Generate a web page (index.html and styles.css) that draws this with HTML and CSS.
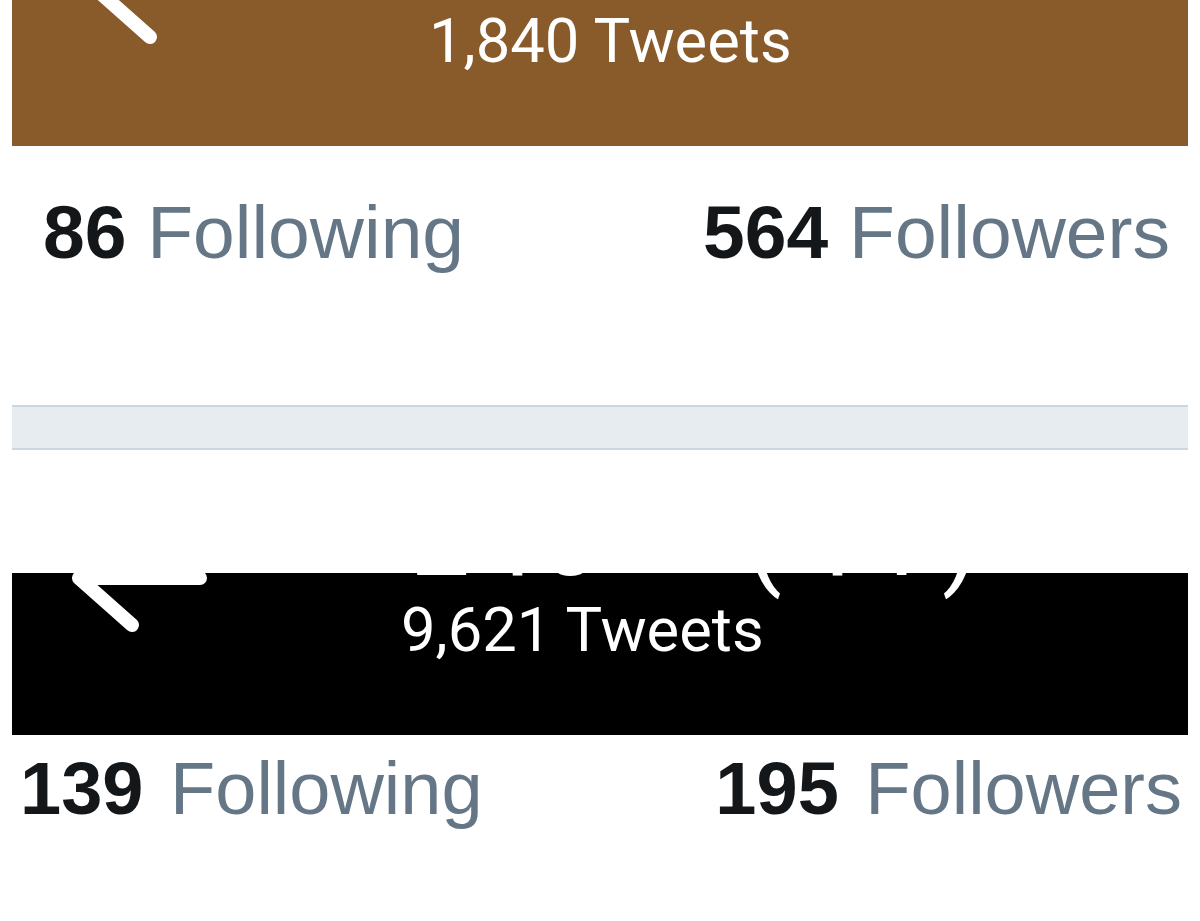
FILE: index.html
```html
<!DOCTYPE html>
<html lang="en">
<head>
    <meta charset="UTF-8">
    <meta name="viewport" content="width=device-width, initial-scale=1.0">
    <title>Profile Stats</title>
    <link rel="stylesheet" href="styles.css">
</head>
<body>

    <main class="feed">

        <section class="profile profile-brown">
            <header class="cover cover-brown">
                <div class="cover-inner">
                    <svg class="back" viewBox="0 0 150 120" width="150" height="120" aria-label="Back">
                        <path d="M10 60 H131 M10 60 L63 13 M10 60 L63 107" />
                    </svg>
                    <div class="title">
                        <div class="name">Jesse</div>
                        <div class="count">1,840 Tweets</div>
                    </div>
                </div>
            </header>
            <div class="stats">
                <a class="stat" href="#"><b>86</b> Following</a>
                <a class="stat" href="#"><b>564</b> Followers</a>
            </div>
        </section>

        <div class="divider"></div>

        <section class="profile profile-dark">
            <header class="cover cover-dark">
                <div class="cover-inner">
                    <svg class="back" viewBox="0 0 150 120" width="150" height="120" aria-label="Back">
                        <path d="M10 60 H131 M10 60 L63 13 M10 60 L63 107" />
                    </svg>
                    <div class="title">
                        <div class="name">240<span class="name-note">(41)</span></div>
                        <div class="count">9,621 Tweets</div>
                    </div>
                </div>
            </header>
            <div class="stats">
                <a class="stat" href="#"><b>139</b> Following</a>
                <a class="stat" href="#"><b>195</b> Followers</a>
            </div>
        </section>

    </main>

</body>
</html>
```

FILE: styles.css
```css
body {
    margin: 0;
    background: #fff;
    font-family: "Liberation Sans", Arial, sans-serif;
}

.feed {
    margin: 0 12px;
}

/* cover bar, scrolled up so the name is cut off */
.cover {
    overflow: hidden;
    color: #fff;
    font-family: Roboto, "Noto Sans", sans-serif;
}

.cover-brown {
    height: 146px;
    background: #8a5b2a;
}

.cover-dark {
    height: 162px;
    background: #000;
}

.cover-inner {
    display: flex;
    align-items: flex-start;
}

.cover-brown .cover-inner {
    margin-top: -90px;
}

.cover-dark .cover-inner {
    margin-top: -74px;
}

.back {
    flex: none;
    margin-top: 20px;
}

.back path {
    fill: none;
    stroke: #fff;
    stroke-width: 14;
    stroke-linecap: round;
    stroke-linejoin: round;
}

.cover-brown .back {
    margin-left: 75px;
}

.cover-dark .back {
    margin-left: 57px;
    margin-top: 19px;
}

.title {
    white-space: nowrap;
}

.cover-brown .title {
    margin-left: 192px;
}

.cover-dark .title {
    margin-left: 182px;
}

.name {
    font-size: 105px;
    font-weight: 400;
    line-height: 96px;
    letter-spacing: 6px;
    text-indent: 10px;
    margin-top: -7px;
    margin-bottom: 7px;
}

.name-note {
    margin-left: 140px;
    letter-spacing: 14px;
}

.count {
    font-size: 61.5px;
    line-height: 70px;
}

/* following / followers row */
.stats {
    display: flex;
    justify-content: space-between;
    font-size: 74px;
    line-height: 84px;
    white-space: nowrap;
}

.profile-brown .stats {
    margin-top: 44px;
    padding: 0 18px 0 31px;
    font-size: 75px;
}

.profile-dark .stats {
    margin-top: 12px;
    padding: 0 6px 0 8px;
    word-spacing: 6px;
}

.stat {
    color: #657786;
    text-decoration: none;
}

.stat b {
    color: #14171a;
}

.divider {
    height: 41px;
    margin: 131px 0 123px;
    background: #e6ecf0;
    border-top: 2px solid #ccd6dd;
    border-bottom: 2px solid #ccd6dd;
}
```
